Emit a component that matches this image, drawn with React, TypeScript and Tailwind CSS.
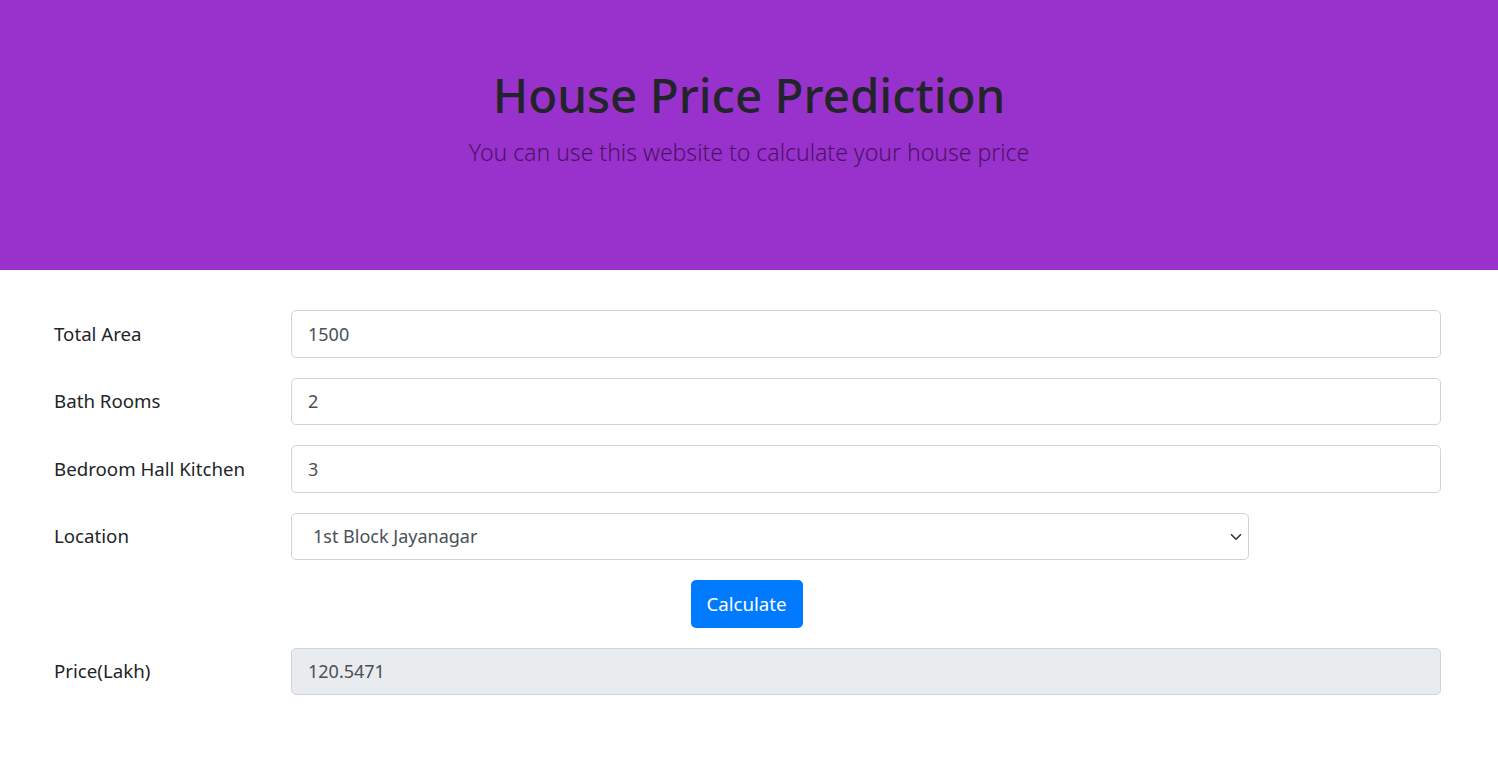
const font = { fontFamily: '"Noto Sans", "Open Sans", Arial, sans-serif' };

function Row({ label, children }: { label: string; children: React.ReactNode }) {
	return (
		<div className="flex items-center">
			<label className="w-[237px] shrink-0 text-[18.7px] text-[#212529]">{label}</label>
			<div className="flex-1">{children}</div>
		</div>
	);
}

const inputCls =
	"w-full h-[47.5px] rounded-[5px] border border-[#ced4da] px-[16px] text-[18px] text-[#495057] outline-none";

export default function App() {
	return (
		<div className="min-h-screen bg-white" style={font}>
			<header className="flex h-[270px] flex-col items-center bg-[#9932cc] pt-[66px]">
				<h1 className="text-[47.5px] font-medium leading-[1.2] text-[#212529]">House Price Prediction</h1>
				<p className="mt-[12px] text-[23px] font-light text-[#4a1266]">
					You can use this website to calculate your house price
				</p>
			</header>

			<form className="flex flex-col gap-[20px] pl-[54px] pr-[57px] pt-[40px]">
				<Row label="Total Area">
					<input className={inputCls + " bg-white"} defaultValue="1500" />
				</Row>
				<Row label="Bath Rooms">
					<input className={inputCls + " bg-white"} defaultValue="2" />
				</Row>
				<Row label="Bedroom Hall Kitchen">
					<input className={inputCls + " bg-white"} defaultValue="3" />
				</Row>
				<Row label="Location">
					<div className="relative w-[958px]">
						<select className={inputCls + " appearance-none bg-white pl-[21px]"} defaultValue="1st Block Jayanagar">
							<option>1st Block Jayanagar</option>
						</select>
						<svg
							className="pointer-events-none absolute right-[6px] top-[18px]"
							width="14"
							height="12"
							viewBox="0 0 16 16"
						>
							<path d="M2 5l6 6 6-6" fill="none" stroke="#343a40" strokeWidth="2.2" strokeLinecap="round" strokeLinejoin="round" />
						</svg>
					</div>
				</Row>
				<div className="flex justify-center pr-[2px]">
					<button
						type="button"
						className="h-[47.5px] w-[112px] rounded-[5px] bg-[#007bff] text-[18.7px] text-white"
					>
						Calculate
					</button>
				</div>
				<Row label="Price(Lakh)">
					<input className={inputCls + " bg-[#e9ecef]"} defaultValue="120.5471" readOnly />
				</Row>
			</form>
		</div>
	);
}
